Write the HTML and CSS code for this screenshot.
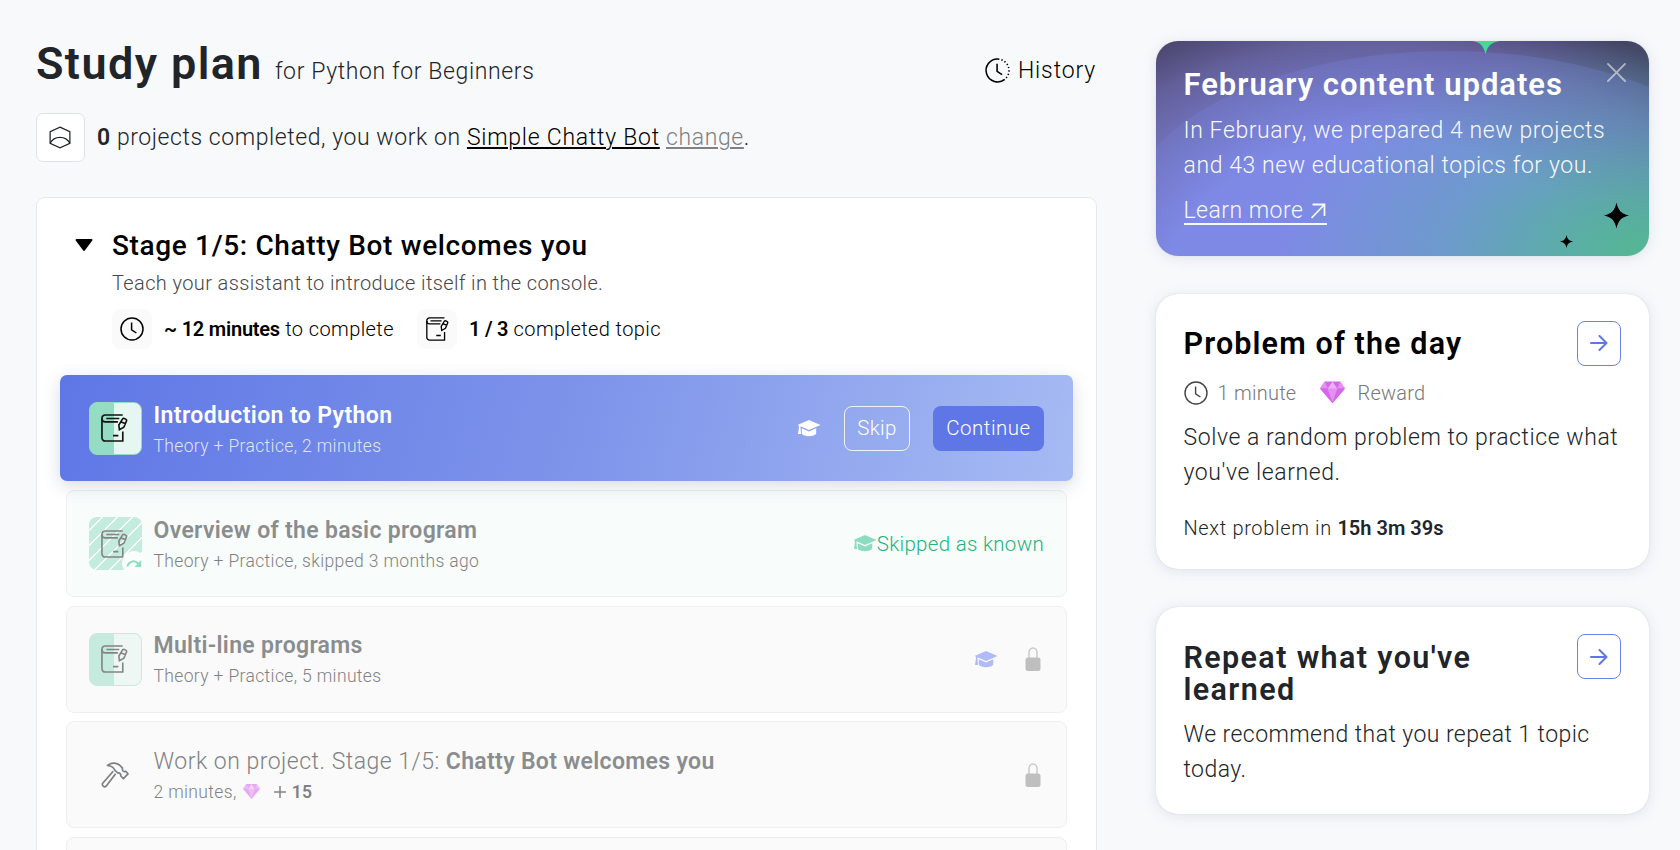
FILE: index.html
```
<!DOCTYPE html>
<html lang="en">
<head>
<meta charset="utf-8">
<title>Study plan</title>
<link rel="stylesheet" href="styles.css">
</head>
<body>
<svg class="defs" width="0" height="0" aria-hidden="true">
  <symbol id="clock" viewBox="0 0 24 24">
    <circle cx="12" cy="12" r="11" /><path d="M11.6 5.6v7.2l4.8 3.2" />
  </symbol>
  <symbol id="book" viewBox="0 0 28 29">
    <path d="M22.500 1H4.300A3.300 3.300 0 0 0 1 4.300V24.700A3.300 3.300 0 0 0 4.300 28h18.300V18" />
    <path d="M1 4.700C1 7 2.300 8.200 4.300 8.200H17.500M19 4.700H5.500M12.500 22.400h5.500" />
    <path d="M22.400 5c.8-1.200 4.400.1 4.200 1.700l-2.900 7-4.600 2.600-.6-4.900zM21 8.300l4.600 1.800" />
  </symbol>
  <symbol id="cap" viewBox="0 0 24 17">
    <path d="M12 0 23.500 5 12 10 3.500 6.300v1.400L4 14H1l.9-6V5.600L.500 5z" /><path d="M4.800 8.300 12 11.400l7.200-3.100v5.200C17.500 17 6.500 17 4.800 13.500z" />
  </symbol>
  <symbol id="gem" viewBox="0 0 26 23">
    <path fill="#d667ea" d="M5 0h16l5 7.500L13 23 0 7.500z" />
    <path fill="#e48ff2" d="M5 0l3 7H0zM21 0l-3 7h8zM8 7.500h10L13 22z" />
    <path fill="#edb0f7" d="M13 0l5 7.500H8z" />
  </symbol>
  <symbol id="lock" viewBox="0 0 16 24">
    <path class="lock-arc" d="M4 11V5.500a4 4.600 0 0 1 8 0V11" /><rect class="lock-body" x=".5" y="10.500" width="15" height="13.500" rx="2.500" />
  </symbol>
  <symbol id="arrow" viewBox="0 0 18 16">
    <path d="M1 8h15.500M9.500 1l7 7-7 7" />
  </symbol>
</svg>

<div class="page">
  <main class="plan">
    <header class="plan-head">
      <h1 class="plan-title">Study plan</h1>
      <span class="plan-track">for Python for Beginners</span>
      <a class="history">
        <svg class="history-icon" viewBox="0 0 24 24"><path d="M12.500 1A11 11 0 1 0 19 20.500" /><path class="dots" d="M12.500 1A11 11 0 0 1 19 20.500" /><path d="M11.600 5.600v7.200l4.800 3.200" /></svg>
        <span>History</span>
      </a>
    </header>

    <div class="projects">
      <span class="projects-icon"><svg viewBox="0 0 24 24"><path d="M12 1.200 22.300 5.800v12.400L12 22.800 1.700 18.200V5.800z" /><path d="M1.700 18C4 13.500 8 11.800 12 11.800s8 1.700 10.300 6.200" /></svg></span>
      <p class="projects-text"><b>0</b> projects completed, you work on <a class="link">Simple Chatty Bot</a> <a class="link muted">change</a>.</p>
    </div>

    <section class="stage">
      <div class="stage-head">
        <svg class="caret" viewBox="0 0 18 12"><path d="M1.500 1h15L9 11z" /></svg>
        <div class="stage-info">
          <h2 class="stage-title">Stage 1/5: Chatty Bot welcomes you</h2>
          <p class="stage-sub">Teach your assistant to introduce itself in the console.</p>
          <div class="stats">
            <span class="chip"><svg class="chip-clock"><use href="#clock" /></svg></span>
            <span class="stat stat-time"><b>~ 12 minutes</b> to complete</span>
            <span class="chip"><svg class="chip-book"><use href="#book" /></svg></span>
            <span class="stat"><b>1 / 3</b> completed topic</span>
          </div>
        </div>
      </div>

      <div class="topics">
        <article class="topic active">
          <span class="tile"><svg class="book"><use href="#book" /></svg></span>
          <div class="topic-text">
            <h3 class="topic-title">Introduction to Python</h3>
            <p class="topic-sub">Theory + Practice, 2 minutes</p>
          </div>
          <div class="actions">
            <svg class="cap"><use href="#cap" /></svg>
            <button class="btn btn-skip">Skip</button>
            <button class="btn btn-go">Continue</button>
          </div>
        </article>

        <article class="topic skipped">
          <span class="tile striped"><svg class="book"><use href="#book" /></svg>
            <span class="redo"><svg viewBox="0 0 16 9"><path d="M1.200 7.500C3.500 1.500 9 .800 12.500 5" /><path class="head" d="M15 1v7H8.500z" /></svg></span>
          </span>
          <div class="topic-text">
            <h3 class="topic-title">Overview of the basic program</h3>
            <p class="topic-sub">Theory + Practice, skipped 3 months ago</p>
          </div>
          <div class="known"><svg class="cap"><use href="#cap" /></svg><span>Skipped as known</span></div>
        </article>

        <article class="topic locked">
          <span class="tile"><svg class="book"><use href="#book" /></svg></span>
          <div class="topic-text">
            <h3 class="topic-title">Multi-line programs</h3>
            <p class="topic-sub">Theory + Practice, 5 minutes</p>
          </div>
          <div class="state"><svg class="cap"><use href="#cap" /></svg><svg class="lock"><use href="#lock" /></svg></div>
        </article>

        <article class="topic locked">
          <span class="tile plain"><svg class="hammer" viewBox="0 0 28 26"><path d="M6.500 3.500C10 .500 15 .300 18.500 3l3 3.200c-.4 2 .3 3.300 2 3.400l1.200-.4 2.300 2.600-4.600 4.800-2.600-2.600c.3-2-1-3.400-3-3l-3.300-3.200C12.500 5 9.500 3.800 6.500 3.500z" /><path d="M12.200 9.200 1.500 21.500c-1 1.800 1.700 4.200 3.600 2.800L14.600 11.700" /></svg></span>
          <div class="topic-text">
            <h3 class="topic-title"><span class="light">Work on project. Stage 1/5:</span> Chatty Bot welcomes you</h3>
            <p class="topic-sub">2 minutes, <svg class="gem-small"><use href="#gem" /></svg><svg class="plus" viewBox="0 0 12 12"><path d="M6 0v12M0 6h12" /></svg><b>15</b></p>
          </div>
          <div class="state"><svg class="lock"><use href="#lock" /></svg></div>
        </article>

        <article class="topic locked"></article>
      </div>
    </section>
  </main>

  <aside class="side">
    <section class="card news">
      <svg class="news-art" viewBox="0 0 494 215">
        <defs><linearGradient id="glow" x1="0" y1="0" x2="0" y2="1"><stop offset="0" stop-color="#7b8be6" stop-opacity=".24" /><stop offset=".5" stop-color="#7b8be6" stop-opacity=".12" /></linearGradient></defs>
        <ellipse cx="293" cy="180" rx="325" ry="170" fill="url(#glow)" />
        <path fill="#45d998" d="M316 0h28c-8 1-12 4-14.500 13C327 4 324 1 316 0z" />
        <path d="M460.500 161.500c2 8.500 4.500 11 12.500 13-8 2-10.500 4.500-12.500 13-2-8.500-4.500-11-12.500-13 8-2 10.500-4.500 12.500-13z" />
        <path d="M410.500 194c1 4.300 2.300 5.500 6.500 6.500-4.200 1-5.500 2.300-6.500 6.500-1-4.200-2.300-5.500-6.500-6.500 4.200-1 5.500-2.200 6.500-6.500z" />
      </svg>
      <svg class="close" viewBox="0 0 20 20"><path d="M1 1l18 18M19 1 1 19" /></svg>
      <h2 class="card-title">February content updates</h2>
      <p class="card-body">In February, we prepared 4 new projects<br>and 43 new educational topics for you.</p>
      <a class="more">Learn more <svg viewBox="0 0 16 16"><path d="M2.500 1.500h12v11.500M14.500 1.500 1.500 15" /></svg></a>
    </section>

    <section class="card daily">
      <a class="go"><svg><use href="#arrow" /></svg></a>
      <h2 class="card-title">Problem of the day</h2>
      <div class="meta">
        <svg class="meta-clock"><use href="#clock" /></svg><span>1 minute</span>
        <svg class="gem"><use href="#gem" /></svg><span>Reward</span>
      </div>
      <p class="card-body">Solve a random problem to practice what<br>you've learned.</p>
      <p class="next">Next problem in <b>15h 3m 39s</b></p>
    </section>

    <section class="card repeat">
      <a class="go"><svg><use href="#arrow" /></svg></a>
      <h2 class="card-title">Repeat what you've<br>learned</h2>
      <p class="card-body">We recommend that you repeat 1 topic<br>today.</p>
    </section>
  </aside>
</div>
</body>
</html>
```
FILE: styles.css
```
* { box-sizing: border-box; margin: 0; padding: 0; }
body {
  height: 850px;
  overflow: hidden;
  background: #f8f9fb;
  color: #212529;
  font-family: Roboto, "Liberation Sans", sans-serif;
  font-weight: 300;
}
svg { display: block; flex: none; fill: none; stroke: currentColor; overflow: visible; }
.defs { position: absolute; }
b { font-weight: 600; }

.page { display: flex; align-items: flex-start; gap: 58.500px; height: 850px; padding-left: 36px; overflow: hidden; }
.plan { width: 1061px; }

.plan-head { display: flex; align-items: baseline; margin-top: 37px; height: 54px; line-height: 54px; font-size: 23px; }
.plan-title { font-size: 45px; font-weight: 600; letter-spacing: 1.4px; }
.plan-track { margin-left: 12px; letter-spacing: .62px; }
.history { display: flex; align-items: center; margin: 0 1px 0 auto; gap: 8px; line-height: 30px; letter-spacing: .85px; color: #000; transform: translateY(4px); }
.history-icon { width: 25px; height: 25px; stroke-width: 1.5; }
.history-icon .dots { stroke-dasharray: 1.300 2; }

.projects { display: flex; align-items: center; gap: 12px; height: 49px; margin-top: 22px; font-size: 23px; }
.projects-icon { display: flex; align-items: center; justify-content: center; width: 49px; height: 49px; padding-right: 2px; border: 1px solid #dfe2e7; border-radius: 7px; background: #fff; }
.projects-icon svg { width: 24px; height: 23px; stroke-width: 1.3; }
.projects-text { padding-top: 1px; line-height: 30px; letter-spacing: .57px; }
.link { color: #000; text-decoration: underline; text-decoration-thickness: 2px; text-underline-offset: 2px; letter-spacing: .74px; }
.link.muted { color: #808182; letter-spacing: .62px; }

.stage { position: relative; z-index: 0; height: 690px; margin-top: 35px; padding: 30px 23px 0 23px; border: 1px solid #e8e9eb; border-radius: 9px; background: #fff; }
.stage-head { display: flex; margin-left: 15px; }
.caret { width: 18px; height: 12px; margin: 11px 19px 0 0; stroke-width: 2; stroke-linejoin: round; fill: #000; color: #000; }
.stage-title { height: 36px; font-size: 28px; font-weight: 500; line-height: 36px; letter-spacing: .65px; color: #000; }
.stage-sub { margin-top: 7px; font-size: 20px; line-height: 24px; letter-spacing: .38px; color: #45474a; }
.stats { display: flex; align-items: center; margin-top: 14px; font-size: 20px; color: #000; }
.chip { display: flex; align-items: center; justify-content: center; width: 40px; height: 40px; margin-right: 12px; border-radius: 9px; background: #fafafa; }
.chip-clock { width: 24px; height: 24px; stroke-width: 1.5; }
.chip-book { width: 23px; height: 24px; stroke-width: 1.6; }
.stat { letter-spacing: .4px; line-height: 24px; }
.stat b { letter-spacing: -.22px; color: #000; }
.stat-time { width: 253px; }

.topics { display: flex; flex-direction: column; gap: 8.500px; margin-top: 26px; }
.topic { display: flex; align-items: center; height: 107px; margin: 0 6px; padding: 0 22px 0 22px; border: 1.500px solid #efefef; border-radius: 8px; background: #fafafa; }
.tile { position: relative; display: flex; align-items: center; justify-content: center; width: 53px; height: 53px; border: 1.500px solid #94dcc3; border-radius: 8px; background: linear-gradient(90deg, #94dcc3 47%, #e6f6f0 47%); color: #111; }
.book { width: 27px; height: 28px; margin-right: 2px; stroke-width: 1.7; }
.topic-text { margin-left: 11.500px; padding-top: 4px; }
.topic-title { font-size: 23px; font-weight: 600; line-height: 30px; letter-spacing: .33px; white-space: nowrap; }
.topic-sub { display: flex; align-items: center; font-size: 17.500px; line-height: 30px; letter-spacing: .36px; }
.light { font-weight: 300; letter-spacing: .5px; }
.cap { width: 24px; height: 17px; fill: currentColor; stroke: none; }

.active { height: 106px; margin: 0 0 .500px; padding: 0 29px; border: 0; border-radius: 7px; background: linear-gradient(105deg, #5f77e6, #7d93ea 50%, #a6bbf3); box-shadow: 0 5px 18px rgba(60, 80, 130, .2); color: #fff; }
.active .topic-text { padding-top: 5px; }
.active .topic-title { letter-spacing: .4px; }
.active .topic-sub { color: rgba(255, 255, 255, .8); }
.actions { display: flex; align-items: center; margin-left: auto; }
.btn { height: 45px; margin-left: 23px; border-radius: 8px; background: none; font: 300 20.500px Roboto, "Liberation Sans", sans-serif; color: #fff; }
.btn-skip { width: 66px; border: 1.500px solid rgba(255, 255, 255, .85); letter-spacing: .3px; }
.btn-go { width: 111px; border: 0; background: #5f77e6; letter-spacing: .5px; }

.skipped { position: relative; z-index: -1; background: #f8fcfb; }
.skipped .tile, .locked .tile { opacity: .5; }
.skipped .topic-text, .locked .topic-text { color: #7f8284; }
.skipped .topic-title, .locked .topic-title { color: #8a8d8f; }
.striped { border: 0; background: repeating-linear-gradient(135deg, #90dcc2 0 8.700px, #fff 8.700px 10.600px); }
.redo { position: absolute; right: -4px; bottom: -5px; display: flex; align-items: center; justify-content: center; width: 24px; height: 24px; border-radius: 50%; background: #fff; color: #2fbf88; }
.redo svg { width: 16px; height: 9px; stroke-width: 2; }
.redo .head { fill: currentColor; stroke: none; }
.known { display: flex; align-items: center; margin-left: auto; font-size: 20.500px; letter-spacing: .3px; color: #22b47c; }
.known .cap { color: #8fdbc0; }

.plain { border: 0; background: none; }
.tile.plain { opacity: 1; color: #7d7f81; }
.light { color: #7f8284; }
.hammer { width: 28px; height: 26px; margin-right: 1px; stroke-width: 1.7; stroke-linejoin: round; }
.state { display: flex; align-items: center; gap: 27px; margin-left: auto; margin-right: 3px; }
.state .cap { color: #afbafa; }
.lock { width: 16px; height: 24px; }
.lock-arc { stroke: #cacaca; stroke-width: 1.500; }
.lock-body { fill: #bfbfbf; stroke: none; }
.gem-small { width: 17px; height: 15px; margin-left: 6px; stroke: none; opacity: .55; }
.plus { width: 12px; height: 12px; margin: 0 6px 0 14px; stroke-width: 1.500; }

.side { display: flex; flex-direction: column; gap: 38px; width: 493.500px; margin-top: 40.500px; }
.card { position: relative; padding: 0 28px; border-radius: 22px; background: #fff; box-shadow: 0 2px 14px rgba(90, 115, 150, .16), 0 0 1px rgba(60, 70, 90, .25); }
.card-title { font-size: 30.500px; font-weight: 600; line-height: 32px; letter-spacing: 1.13px; }
.card-body { font-size: 23px; line-height: 35px; letter-spacing: .57px; white-space: nowrap; }
.news { height: 215px; padding-top: 27.500px; overflow: hidden; color: #fff; background:
  radial-gradient(75% 105% at 100% 100%, #4fbe86 0, rgba(80, 186, 145, .88) 20%, rgba(88, 176, 172, .5) 55%, rgba(100, 165, 205, 0) 100%),
  radial-gradient(90% 145% at 45% 115%, #7f89e6 0, #7f89e6 48%, #64609c 79%, #423f60 96%); }
.news-art { position: absolute; inset: 0; width: 494px; height: 215px; fill: #000; stroke: none; }
.close { position: absolute; top: 22px; right: 23px; width: 19px; height: 19px; stroke-width: 2; stroke-linecap: round; opacity: .55; }
.news .card-title { position: relative; font-size: 31px; line-height: 34px; letter-spacing: .98px; }
.news .card-body { position: relative; margin-top: 10.500px; letter-spacing: .58px; opacity: .95; }
.more { position: relative; display: inline-flex; align-items: center; gap: 7px; height: 26px; margin-top: 16px; padding-right: 1px; border-bottom: 2px solid; font-size: 23px; line-height: 24px; letter-spacing: .48px; opacity: .95; }
.more svg { width: 16px; height: 16px; stroke-width: 1.800; }

.daily { height: 275.500px; padding-top: 34px; }
.daily .card-title { color: #000; }
.go { position: absolute; top: 27px; right: 28px; display: flex; align-items: center; justify-content: center; width: 44px; height: 45px; border: 1.500px solid #6c82ea; border-radius: 8px; color: #5f77e6; }
.go svg { width: 18px; height: 16px; stroke-width: 2; stroke-linecap: round; stroke-linejoin: round; }
.meta { display: flex; align-items: center; height: 24px; margin-top: 21px; font-size: 20px; letter-spacing: .25px; color: #77787a; }
.meta-clock { width: 24px; height: 24px; margin-right: 10px; stroke-width: 1.400; color: #444; }
.gem { width: 25px; height: 23px; margin: 0 12px 0 24px; stroke: none; }
.daily .card-body { margin-top: 15px; }
.next { margin-top: 26px; font-size: 20px; line-height: 24px; letter-spacing: .66px; }
.next b { letter-spacing: .02px; }

.repeat { height: 206.500px; padding-top: 34.500px; }
.repeat .card-title { letter-spacing: 1.38px; }
.repeat .card-body { margin-top: 11px; letter-spacing: .43px; }
```
